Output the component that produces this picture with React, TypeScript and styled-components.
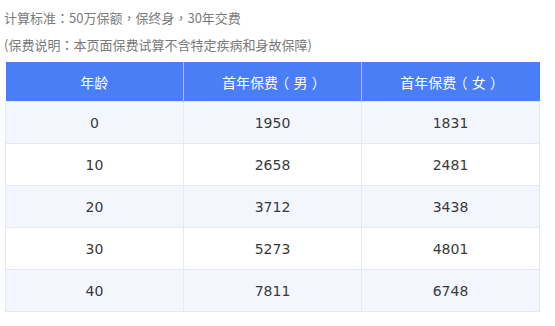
import { createGlobalStyle, styled } from "styled-components"

const rows = [
  { age: "0", male: "1950", female: "1831" },
  { age: "10", male: "2658", female: "2481" },
  { age: "20", male: "3712", female: "3438" },
  { age: "30", male: "5273", female: "4801" },
  { age: "40", male: "7811", female: "6748" },
]

const GlobalStyle = createGlobalStyle`
  body {
    margin: 0;
    background: #ffffff;
    font-family: "Noto Sans CJK TC", "Noto Sans CJK SC", "Noto Sans", sans-serif;
  }
`

const Page = styled.div`
  width: 555px;
  padding: 8px 15px 0 4px;
  box-sizing: border-box;
`

const Note = styled.p`
  margin: 0;
  height: 27px;
  line-height: 20px;
  font-size: 13px;
  color: #7a7a7a;
`

const Table = styled.table`
  margin: 0 0 0 1px;
  width: 535px;
  border-collapse: collapse;
  table-layout: fixed;
`

const HeadCell = styled.th`
  height: 39px;
  padding: 0;
  background: #4a7ef6;
  color: #ffffff;
  font-size: 14px;
  font-weight: 400;
  text-align: center;
  border-left: 1px solid #a9c1fb;

  &:first-child {
    border-left: none;
  }
`

// full-width bracket, glyph centred in its em box
const Paren = styled.span`
  display: inline-block;
  width: 1.1em;
  text-align: center;
  font-feature-settings: "halt" 1;
`

const Row = styled.tr<{ $shaded: boolean }>`
  background: ${(p) => (p.$shaded ? "#f4f6fe" : "#ffffff")};
`

const Cell = styled.td`
  height: 41px;
  padding: 0;
  text-align: center;
  font-family: "DejaVu Sans", sans-serif;
  font-size: 14px;
  color: #3a3a3a;
  border: 1px solid #e6e9f0;
`

const Premium = ({ who }: { who: string }) => (
  <>
    首年保费<Paren>（</Paren>
    {who}
    <Paren>）</Paren>
  </>
)

const App = () => {
  return (
    <Page>
      <GlobalStyle />
      <Note>计算标准：50万保额，保终身，30年交费</Note>
      <Note>(保费说明：本页面保费试算不含特定疾病和身故保障)</Note>
      <Table>
        <thead>
          <tr>
            <HeadCell>年龄</HeadCell>
            <HeadCell>
              <Premium who="男" />
            </HeadCell>
            <HeadCell>
              <Premium who="女" />
            </HeadCell>
          </tr>
        </thead>
        <tbody>
          {rows.map((r, i) => (
            <Row key={r.age} $shaded={i % 2 === 0}>
              <Cell>{r.age}</Cell>
              <Cell>{r.male}</Cell>
              <Cell>{r.female}</Cell>
            </Row>
          ))}
        </tbody>
      </Table>
    </Page>
  )
}

export default App
